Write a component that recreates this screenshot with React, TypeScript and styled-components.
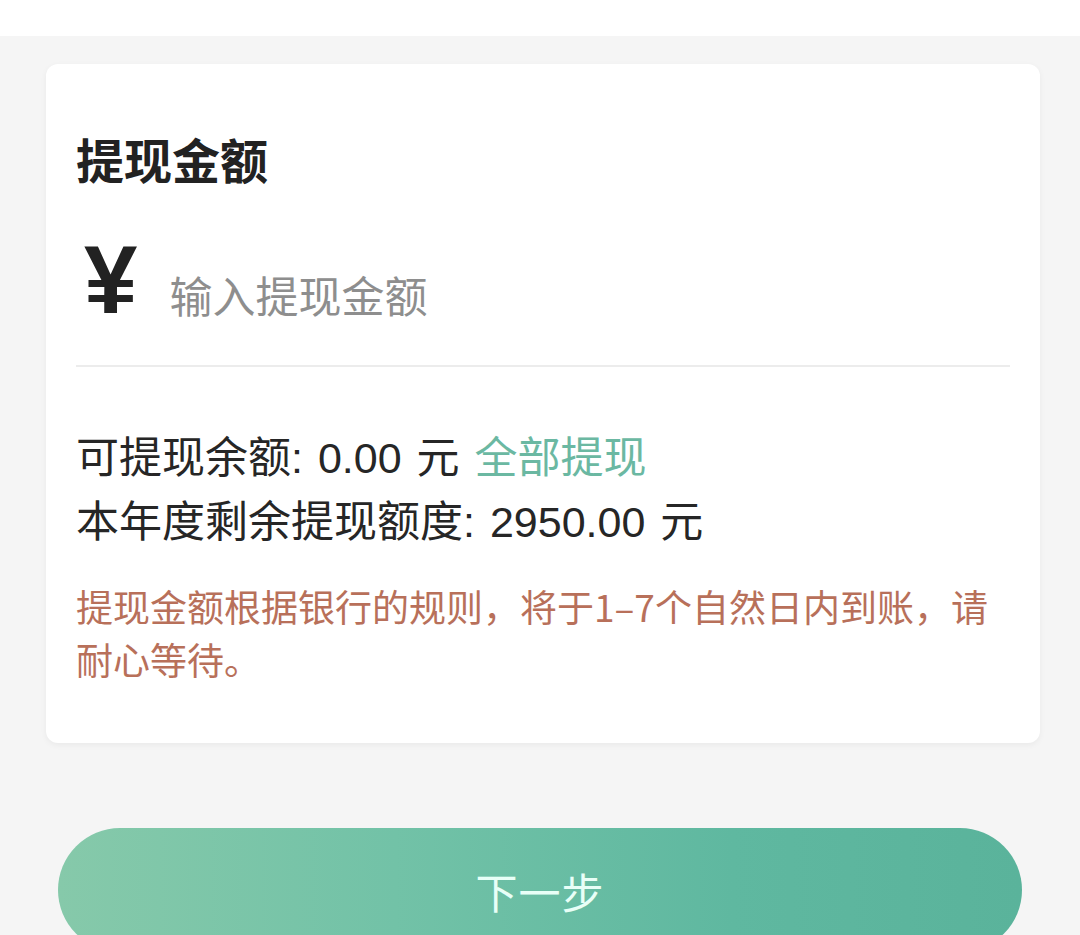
import React from "react";
import styled, { createGlobalStyle } from "styled-components";

const GlobalStyle = createGlobalStyle`
  html, body {
    margin: 0;
    padding: 0;
    background: #f5f5f5;
  }
  body {
    font-family: "Noto Sans CJK SC", "Noto Sans", sans-serif;
    color: #222;
  }
`;

export default function App() {
  return (
    <>
      <GlobalStyle />
      <Page>
        <TopBar />
        <Main>
          <Card>
            <Title>提现金额</Title>
            <AmountRow>
              <Yen>¥</Yen>
              <AmountInput placeholder="输入提现金额" />
            </AmountRow>
            <Divider />
            <InfoBlock>
              <InfoLine>
                可提现余额: 0.00 元 <LinkText>全部提现</LinkText>
              </InfoLine>
              <InfoLine>本年度剩余提现额度: 2950.00 元</InfoLine>
            </InfoBlock>
            <Notice>
              提现金额根据银行的规则，将于1–7个自然日内到账，请耐心等待。
            </Notice>
          </Card>
          <NextButton type="button">下一步</NextButton>
        </Main>
      </Page>
    </>
  );
}

const Page = styled.div`
  min-height: 935px;
  overflow: hidden;
  background: #f5f5f5;
`;

const TopBar = styled.div`
  height: 36px;
  background: #ffffff;
`;

const Main = styled.main`
  display: flex;
  flex-direction: column;
  padding: 28px 0 0;
`;

const Card = styled.section`
  margin: 0 40px 0 46px;
  padding: 64px 30px 57px 30px;
  background: #ffffff;
  border-radius: 12px;
  box-shadow: 0 2px 6px rgba(0, 0, 0, 0.05);
`;

const Title = styled.h2`
  margin: 0;
  font-size: 48px;
  line-height: 60px;
  font-weight: 700;
  color: #222;
`;

const AmountRow = styled.div`
  display: flex;
  align-items: baseline;
  gap: 32px;
  margin-top: 44px;
  padding: 0 0 37px 8px;
`;

const Yen = styled.span`
  font-family: "Liberation Sans", Arial, sans-serif;
  font-size: 96px;
  line-height: 1;
  font-weight: 700;
  color: #222;
`;

const AmountInput = styled.input`
  flex: 1;
  border: none;
  outline: none;
  padding: 0;
  background: transparent;
  font-family: "Noto Sans CJK SC", sans-serif;
  font-size: 43px;
  line-height: 56px;
  color: #222;

  &::placeholder {
    color: #8e8e8e;
  }
`;

const Divider = styled.hr`
  margin: 0;
  border: none;
  height: 2px;
  background: #ececec;
`;

const InfoBlock = styled.div`
  margin-top: 59px;
`;

const InfoLine = styled.p`
  margin: 0;
  font-family: "Liberation Sans", "Noto Sans CJK SC", sans-serif;
  font-size: 43px;
  line-height: 64px;
  word-spacing: 3px;
  color: #262626;
  white-space: nowrap;
`;

const LinkText = styled.span`
  color: #6bb8a2;
`;

const Notice = styled.p`
  margin: 26px 0 0;
  font-size: 37px;
  line-height: 53px;
  color: #b8705a;
`;

const NextButton = styled.button`
  margin: 85px 58px 0;
  height: 124px;
  border: none;
  border-radius: 62px;
  background: linear-gradient(90deg, #86c9aa 0%, #72c2a7 35%, #5fb8a0 70%, #5ab39b 100%);
  color: #e8fff7;
  font-family: "Noto Sans CJK SC", sans-serif;
  font-size: 42px;
  font-weight: 400;
  letter-spacing: 1px;
  cursor: pointer;
`;
